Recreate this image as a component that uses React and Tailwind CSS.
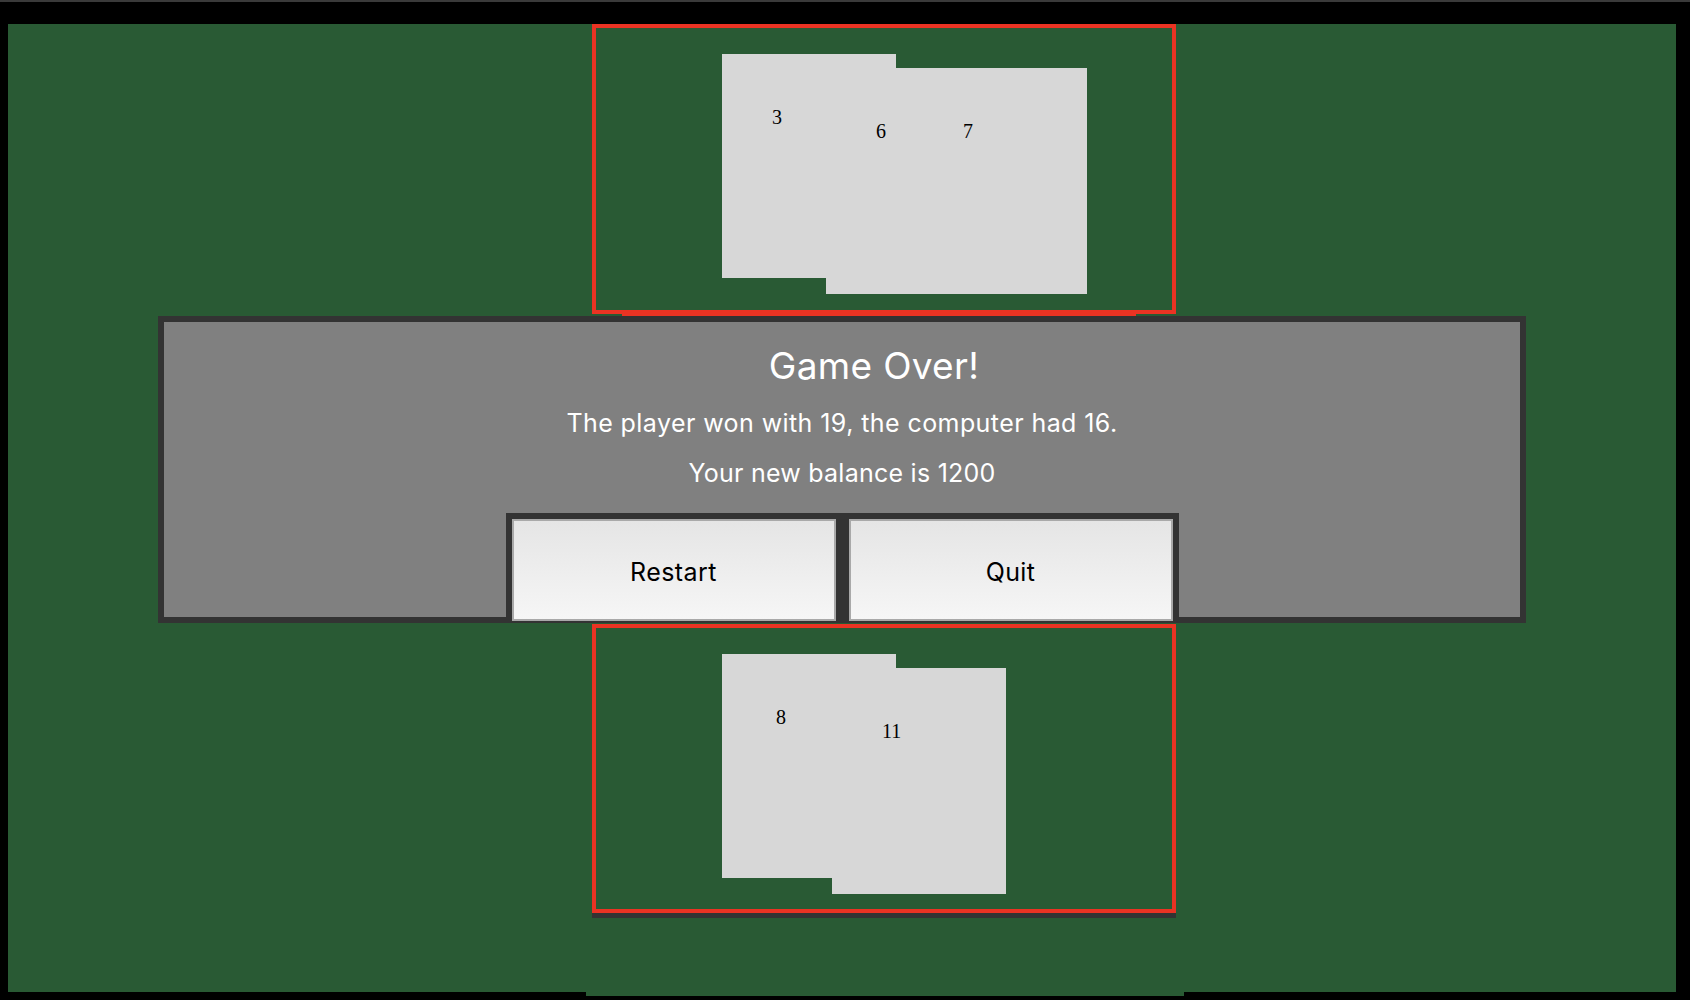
import React from 'react';

// a single playing card, just the value printed near the top-left
const Card = ({ value, className = '' }) => (
  <div
    className={`w-[174px] shrink-0 bg-[#d7d7d7] pt-[52px] text-[20px] leading-[22px] text-black ${className}`}
    style={{ fontFamily: '"Liberation Serif", "Times New Roman", serif' }}
  >
    {value}
  </div>
);

const App = () => {
  const dealerCards = [3, 6, 7];
  const playerCards = [8, 11];

  return (
    <div className="h-screen bg-black overflow-hidden" style={{ fontFamily: 'Inter, "Noto Sans", sans-serif' }}>
      <div className="h-[2px] bg-[#3a3a3a]" />
      <div className="pt-[22px] pl-[8px] pr-[14px]">
        {/* Table */}
        <div className="relative h-[968px] bg-[#295a34]">
          {/* Dealer hand */}
          <div className="ml-[584px] w-[584px] h-[290px] border-4 border-[#ea3323] pl-[126px] pt-[26px] flex items-start">
            <Card value={dealerCards[0]} className="h-[224px] pl-[50px]" />
            <Card value={dealerCards[1]} className="h-[226px] pl-[50px] mt-[14px] ml-[-70px]" />
            <Card value={dealerCards[2]} className="h-[226px] pl-[50px] mt-[14px] ml-[-87px]" />
          </div>

          {/* Middle area, mostly hidden behind the result panel */}
          <div className="ml-[614px] w-[514px] h-[310px] border-t-2 border-[#ea3323]" />

          {/* Player hand */}
          <div className="ml-[584px] w-[584px] h-[289px] border-4 border-[#ea3323] pl-[126px] pt-[26px] flex items-start">
            <Card value={playerCards[0]} className="h-[224px] pl-[54px]" />
            <Card value={playerCards[1]} className="h-[226px] w-[172px] pl-[50px] mt-[14px] ml-[-64px]" />
          </div>
          <div className="ml-[584px] w-[584px] h-[5px] bg-[#333]" />
          <div className="ml-[578px] w-[598px] h-[78px] bg-[#295a34]" />

          {/* Game over panel */}
          <div className="absolute left-[150px] top-[292px] w-[1368px] h-[307px] border-[6px] border-[#333] bg-[#808080] flex flex-col items-center text-white">
            <h1 className="mt-[23px] pl-[64px] text-[37px] leading-[42px] tracking-[0.3px] font-normal">Game Over!</h1>
            <p className="mt-[21px] text-[25px] leading-[30px] tracking-[0.42px]">
              The player won with 19, the computer had 16.
            </p>
            <p className="mt-[20px] text-[25px] leading-[30px] tracking-[0.25px]">Your new balance is 1200</p>
            <div className="mt-[25px] flex gap-[13px] bg-[#333] px-[6px] pt-[6px]">
              <button className="w-[324px] h-[102px] pt-[5px] border-2 border-[#a9a9a9] bg-linear-to-b from-[#e5e5e5] to-[#f6f6f6] text-[25px] tracking-[0.45px] text-black">
                Restart
              </button>
              <button className="w-[324px] h-[102px] pt-[5px] border-2 border-[#a9a9a9] bg-linear-to-b from-[#e5e5e5] to-[#f6f6f6] text-[25px] tracking-[0.3px] text-black">
                Quit
              </button>
            </div>
          </div>
        </div>
      </div>
    </div>
  );
};

export default App;
